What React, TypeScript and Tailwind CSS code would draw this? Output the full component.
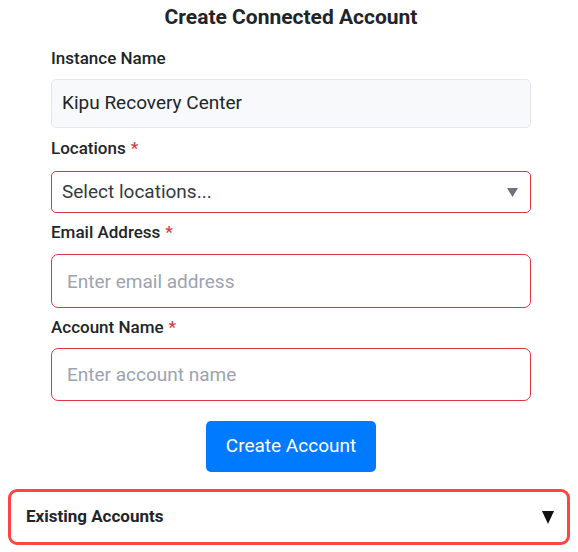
const font = { fontFamily: 'Roboto, "Liberation Sans", sans-serif' };

function Label({ text, required }: { text: string; required?: boolean }) {
  return (
    <label className="block text-[17px] leading-6 font-medium text-[#212529]">
      {text}
      {required && <span className="ml-[5px] text-[#dc3545]">*</span>}
    </label>
  );
}

export default function App() {
  return (
    <div className="min-h-[552px] w-[578px] bg-white" style={font}>
      <div className="ml-[51px] w-[480px] pt-[3px]">
        <h2 className="text-center text-[21px] leading-7 font-bold text-[#212529]">
          Create Connected Account
        </h2>

        <div className="mt-[15px]">
          <Label text="Instance Name" />
          <input
            readOnly
            value="Kipu Recovery Center"
            className="mt-[9px] block h-[49px] w-full rounded-[5px] border border-[#e5e7eb] bg-[#f8f9fa] px-[10px] pb-[3px] text-[19px] text-[#212529] outline-none"
          />
        </div>

        <div className="mt-[8px]">
          <Label text="Locations" required />
          <div className="mt-[11px] flex h-[42px] w-full items-center justify-between rounded-[5px] border border-[#dc3545] pl-[10px] pr-[12px]">
            <span className="text-[19px] text-[#343a40]">Select locations...</span>
            <svg width="11" height="9" viewBox="0 0 11 9">
              <path d="M0 0 L11 0 L5.5 9 Z" fill="#6c757d" />
            </svg>
          </div>
        </div>

        <div className="mt-[7px]">
          <Label text="Email Address" required />
          <input
            placeholder="Enter email address"
            className="mt-[10px] block h-[54px] w-full rounded-[7px] border border-[#dc3545] px-[15px] text-[19px] text-[#212529] outline-none placeholder:text-[#9ca3af]"
          />
        </div>

        <div className="mt-[7px]">
          <Label text="Account Name" required />
          <input
            placeholder="Enter account name"
            className="mt-[9px] block h-[53px] w-full rounded-[7px] border border-[#dc3545] px-[15px] text-[19px] text-[#212529] outline-none placeholder:text-[#9ca3af]"
          />
        </div>

        <div className="mt-[20px] flex justify-center">
          <button className="h-[51px] w-[170px] rounded-[5px] bg-[#007bff] text-[19px] text-white">
            Create Account
          </button>
        </div>
      </div>

      <div className="mx-[8px] mt-[17px] flex h-[56px] items-center justify-between rounded-[9px] border-[3px] border-[#ff4444] pl-[15px] pr-[13px]">
        <span className="text-[17px] font-bold text-[#212529]">Existing Accounts</span>
        <svg width="12" height="13" viewBox="0 0 12 13">
          <path d="M0 0 L12 0 L6 13 Z" fill="#111111" />
        </svg>
      </div>
    </div>
  );
}
